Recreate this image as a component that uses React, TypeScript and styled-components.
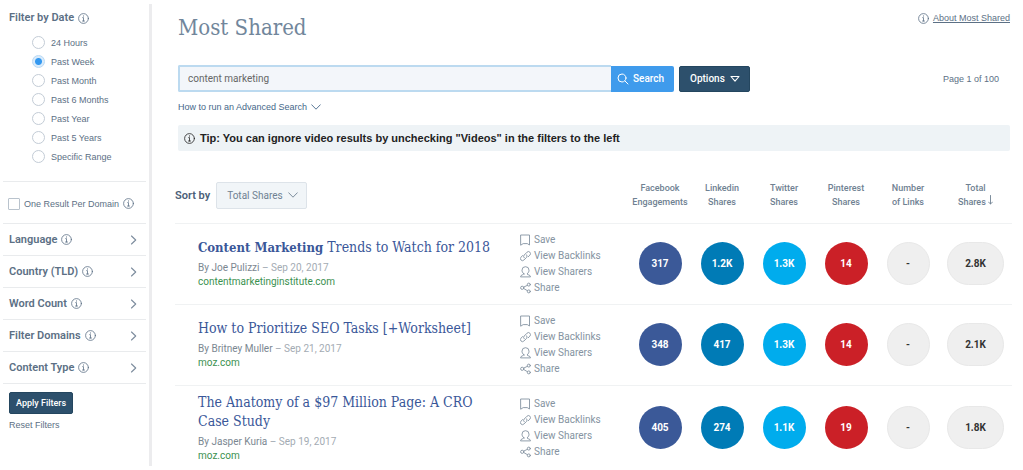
import React from "react";
import styled, { createGlobalStyle, css } from "styled-components";

const Global = createGlobalStyle`
  *, *::before, *::after { box-sizing: border-box; }
  body {
    margin: 0;
    background: #fff;
    color: #5c7085;
    font-family: Roboto, "Liberation Sans", sans-serif;
    font-size: 10px;
    line-height: 14px;
  }
  button, input, select { font: inherit; color: inherit; }
  a { color: inherit; text-decoration: none; }
`;

const slab = css`
  font-family: "Roboto Slab", "DejaVu Serif Condensed", "DejaVu Serif", serif;
`;

const small = css`
  font-family: "Liberation Sans", Arial, sans-serif;
  font-size: 9px;
`;

const Page = styled.div`
  display: flex;
  min-height: 470px;
`;

/* Sidebar */

const Sidebar = styled.aside`
  flex: 0 0 152px;
  margin: 4px 0;
  padding: 0 3px;
  border-right: 3px solid #ececee;
`;

const DateFilter = styled.fieldset`
  border: 0;
  border-bottom: 1px solid #e9ebed;
  margin: 0;
  padding: 7px 6px 15px;
`;

const FilterTitle = styled.legend`
  float: left;
  width: 100%;
  display: flex;
  align-items: center;
  gap: 4px;
  padding: 0;
  margin-bottom: 8px;
  font-size: 11px;
  font-weight: 600;
`;

const RadioRow = styled.label`
  ${small}
  clear: both;
  display: flex;
  align-items: center;
  gap: 6px;
  height: 19px;
  padding-left: 23px;
`;

const Radio = styled.input`
  appearance: none;
  width: 13px;
  height: 13px;
  margin: 0;
  border: 1px solid #c3ccd6;
  border-radius: 50%;
  background: #fff;
  &:checked {
    border-color: #b9d9f5;
    background: radial-gradient(circle, #3398f0 0 3px, #d9ebfb 4px);
  }
`;

const CheckRow = styled.div`
  ${small}
  display: flex;
  align-items: center;
  gap: 4px;
  height: 42px;
  padding: 2px 5px 0;
  border-bottom: 1px solid #e9ebed;
  white-space: nowrap;
`;

const Checkbox = styled.input`
  appearance: none;
  flex: none;
  width: 12px;
  height: 12px;
  margin: 0;
  border: 1px solid #b9c3cd;
  border-radius: 1px;
  background: #fff;
`;

const FilterButton = styled.button`
  display: flex;
  align-items: center;
  gap: 4px;
  width: 100%;
  height: 32px;
  padding: 0 9px 0 6px;
  border: 0;
  border-bottom: 1px solid #e9ebed;
  background: none;
  font-size: 11px;
  font-weight: 600;
  svg:last-child { margin-left: auto; }
`;

const SideActions = styled.div`
  display: flex;
  flex-direction: column;
  align-items: flex-start;
  gap: 4px;
  padding: 8px 6px 0;
`;

const ApplyButton = styled.button`
  height: 22px;
  padding: 0 6px;
  border: 1px solid #24465f;
  border-radius: 2px;
  background: #2d506c;
  color: #fff;
  font-size: 9px;
  font-weight: 500;
`;

const ResetLink = styled.a`
  ${small}
`;

/* Main column */

const Main = styled.main`
  flex: 1;
  min-width: 0;
`;

const Top = styled.div`
  padding: 11px 13px 0 26px;
`;

const Heading = styled.header`
  display: flex;
  justify-content: space-between;
  align-items: flex-start;
  height: 54px;
`;

const Title = styled.h1`
  ${slab}
  margin: 0;
  font-size: 22px;
  line-height: 34px;
  font-weight: 300;
  color: #71869b;
`;

const About = styled.a`
  ${small}
  display: flex;
  align-items: center;
  gap: 4px;
  span { text-decoration: underline; }
`;

const SearchBar = styled.form`
  display: flex;
  align-items: center;
  height: 27px;
`;

const SearchInput = styled.input`
  flex: 1;
  min-width: 0;
  height: 27px;
  padding: 0 8px;
  border: 2px solid #bcdaf0;
  border-right: 0;
  border-radius: 2px 0 0 2px;
  background: #f3f6fa;
  color: #666;
  outline: none;
`;

const SearchButton = styled.button`
  display: flex;
  align-items: center;
  gap: 4px;
  height: 26px;
  width: 63px;
  padding: 0 6px;
  border: 0;
  border-radius: 0 2px 2px 0;
  background: #3f9bec;
  color: #fff;
  font-weight: 500;
`;

const OptionsButton = styled(SearchButton)`
  justify-content: space-between;
  width: 71px;
  margin-left: 5px;
  padding: 0 9px 0 10px;
  border: 1px solid #24465f;
  border-radius: 2px;
  background: #2d506c;
`;

const PageCount = styled.div`
  ${small}
  width: 260px;
  padding-right: 11px;
  text-align: right;
`;

const Advanced = styled.a`
  ${small}
  display: inline-flex;
  align-items: center;
  gap: 4px;
  margin-top: 8px;
  color: #46688a;
`;

const Tip = styled.div`
  display: flex;
  align-items: center;
  gap: 5px;
  height: 26px;
  margin-top: 11px;
  padding: 0 6px;
  border-radius: 2px;
  background: #eef3f6;
  color: #222;
  font-family: "Liberation Sans", Arial, sans-serif;
  font-size: 11px;
  font-weight: 700;
`;

/* Results */

const Results = styled.section`
  padding: 21px 11px 0 23px;
`;

const Table = styled.table`
  width: 100%;
  border-collapse: collapse;
  table-layout: fixed;
`;

const Col = styled.col<{ $w?: number }>`
  ${(p) => p.$w && `width: ${p.$w}px;`}
`;

const HeadCell = styled.th`
  height: 51px;
  padding: 9px 0 0;
  vertical-align: top;
  text-align: center;
  font-size: 9px;
  font-weight: 500;
  color: #6f8192;
  white-space: nowrap;
`;

const SortCell = styled.td`
  padding: 10px 0 0;
  vertical-align: top;
`;

const Sort = styled.label`
  display: inline-flex;
  align-items: center;
  gap: 6px;
  font-size: 11px;
  font-weight: 600;
  color: #4b6078;
`;

const SelectWrap = styled.span`
  position: relative;
  color: #6f8192;
  svg {
    position: absolute;
    right: 9px;
    top: 9px;
    pointer-events: none;
  }
`;

const Select = styled.select`
  appearance: none;
  display: block;
  width: 91px;
  height: 27px;
  padding: 0 10px;
  border: 1px solid #dde3e9;
  border-radius: 2px;
  background: #f1f5f8;
  font-size: 10px;
  font-weight: 400;
`;

const Row = styled.tr`
  border-top: 1px solid #f0f2f3;
`;

const Cell = styled.td`
  padding: 8px 0;
  text-align: center;
  vertical-align: middle;
`;

const TextCell = styled(Cell)`
  padding: 7px 20px 7px 23px;
  text-align: left;
`;

const ArticleTitle = styled.h2`
  ${slab}
  margin: 0 0 4px;
  font-size: 14px;
  line-height: 19px;
  font-weight: 400;
  color: #3a5799;
  strong { font-size: 13px; }
`;

const Byline = styled.div`
  color: #a3abb3;
  b {
    font-weight: 400;
    color: #7b8791;
  }
`;

const Domain = styled.a`
  display: block;
  color: #3b9150;
`;

const Actions = styled.div`
  display: flex;
  flex-direction: column;
  align-items: flex-start;
`;

const Action = styled.button`
  display: flex;
  align-items: center;
  gap: 3px;
  height: 16px;
  padding: 0 1px;
  border: 0;
  background: none;
  color: #8593a1;
`;

const tones = {
  facebook: "#3b5998",
  linkedin: "#007bb6",
  twitter: "#00aced",
  pinterest: "#cb2027",
  plain: "#efefef",
};

const Badge = styled.span<{ $tone: keyof typeof tones; $wide?: boolean }>`
  display: inline-flex;
  align-items: center;
  justify-content: center;
  width: ${(p) => (p.$wide ? 57 : 43)}px;
  height: 43px;
  border: 1px solid ${(p) => (p.$tone === "plain" ? "#e8e8e8" : "transparent")};
  border-radius: 22px;
  vertical-align: middle;
  background: ${(p) => tones[p.$tone]} border-box;
  color: ${(p) => (p.$tone === "plain" ? "#333" : "#fff")};
  font-weight: 700;
`;

/* Icons */

const Svg = styled.svg`
  flex: none;
  fill: none;
  stroke: currentColor;
  stroke-linecap: round;
  stroke-linejoin: round;
`;

const InfoIcon = () => (
  <Svg width="11" height="11" viewBox="0 0 11 11" strokeWidth="0.8">
    <circle cx="5.5" cy="5.5" r="4.9" />
    <path d="M4.700 4.600h.8v3.400M4.500 8h2M5.500 2.800v.4" />
  </Svg>
);

const RightIcon = () => (
  <Svg width="7" height="10" viewBox="0 0 7 10" strokeWidth="1.1" opacity="0.8">
    <path d="M1.5 1 5.7 5 1.5 9" />
  </Svg>
);

const DownIcon = () => (
  <Svg width="10" height="8" viewBox="0 0 10 8" strokeWidth="0.9">
    <path d="M.7 1.8 5 6.2 9.3 1.8" />
  </Svg>
);

const SearchIcon = () => (
  <Svg width="12" height="12" viewBox="0 0 12 12" strokeWidth="1">
    <circle cx="5" cy="5" r="4" />
    <path d="m8 8 3 3" />
  </Svg>
);

const CaretIcon = () => (
  <Svg width="10" height="8" viewBox="0 0 10 8" strokeWidth="1.1">
    <path d="M1 1.5h8L5 6.200z" />
  </Svg>
);

const SortArrow = () => (
  <Svg width="5" height="10" viewBox="0 0 5 10" strokeWidth="0.9">
    <path d="M2.5.5v8.5M.5 7l2 2 2-2" />
  </Svg>
);

const SaveIcon = () => (
  <Svg width="11" height="12" viewBox="0 0 11 12" strokeWidth="0.9">
    <path d="M1 1h8.500v10L7.300 9.600H3.200L1 11z" />
  </Svg>
);

const LinkIcon = () => (
  <Svg width="11" height="12" viewBox="0 0 11 12" strokeWidth="0.9">
    <path d="M4.2 7.8A2 2 0 0 1 4.2 5L7 2.2a2 2 0 0 1 2.9 2.9L8.2 6.8" />
    <path d="M6.6 4.8a2 2 0 0 1 0 2.6L3.9 10A2 2 0 0 1 1 7.200l1.600-1.700" />
  </Svg>
);

const PersonIcon = () => (
  <Svg width="11" height="12" viewBox="0 0 11 12" strokeWidth="0.9">
    <path d="M4 8C2.200 6.400 2 5.200 2 4.200a3.500 3.500 0 0 1 7 0C9 5.200 8.800 6.400 7 8c0 1 3.500.5 3.500 2.900H.5C.5 8.500 4 9 4 8z" />
  </Svg>
);

const ShareIcon = () => (
  <Svg width="11" height="12" viewBox="0 0 11 12" strokeWidth="0.9">
    <circle cx="2.200" cy="5.800" r="1.600" />
    <circle cx="8.800" cy="2.600" r="1.500" />
    <circle cx="8.800" cy="9.400" r="1.500" />
    <path d="m3.700 5.100 3.700-1.800M3.700 6.500l3.700 2.200" />
  </Svg>
);

/* Data */

const ranges = ["24 Hours", "Past Week", "Past Month", "Past 6 Months", "Past Year", "Past 5 Years", "Specific Range"];
const filters = ["Language", "Country (TLD)", "Word Count", "Filter Domains", "Content Type"];
const columns = [
  ["Facebook", "Engagements"],
  ["Linkedin", "Shares"],
  ["Twitter", "Shares"],
  ["Pinterest", "Shares"],
  ["Number", "of Links"],
];

const articles = [
  {
    title: <><strong>Content Marketing</strong> Trends to Watch for 2018</>,
    author: "Joe Pulizzi", date: "Sep 20, 2017", domain: "contentmarketinginstitute.com",
    counts: ["317", "1.2K", "1.3K", "14", "-"], total: "2.8K",
  },
  {
    title: "How to Prioritize SEO Tasks [+Worksheet]",
    author: "Britney Muller", date: "Sep 21, 2017", domain: "moz.com",
    counts: ["348", "417", "1.3K", "14", "-"], total: "2.1K",
  },
  {
    title: "The Anatomy of a $97 Million Page: A CRO Case Study",
    author: "Jasper Kuria", date: "Sep 19, 2017", domain: "moz.com",
    counts: ["405", "274", "1.1K", "19", "-"], total: "1.8K",
  },
];

const badgeTones: (keyof typeof tones)[] = ["facebook", "linkedin", "twitter", "pinterest", "plain"];

export default function App() {
  return (
    <>
      <Global />
      <Page>
        <Sidebar>
          <DateFilter>
            <FilterTitle>Filter by Date <InfoIcon /></FilterTitle>
            {ranges.map((r) => (
              <RadioRow key={r}>
                <Radio type="radio" name="range" defaultChecked={r === "Past Week"} />
                {r}
              </RadioRow>
            ))}
          </DateFilter>
          <CheckRow>
            <Checkbox type="checkbox" id="one-result" />
            <label htmlFor="one-result">One Result Per Domain</label>
            <InfoIcon />
          </CheckRow>
          {filters.map((f) => (
            <FilterButton key={f} type="button">{f} <InfoIcon /><RightIcon /></FilterButton>
          ))}
          <SideActions>
            <ApplyButton type="button">Apply Filters</ApplyButton>
            <ResetLink href="#reset">Reset Filters</ResetLink>
          </SideActions>
        </Sidebar>

        <Main>
          <Top>
            <Heading>
              <Title>Most Shared</Title>
              <About href="#about"><InfoIcon /><span>About Most Shared</span></About>
            </Heading>
            <SearchBar onSubmit={(e) => e.preventDefault()}>
              <SearchInput aria-label="Search" defaultValue="content marketing" />
              <SearchButton type="submit"><SearchIcon />Search</SearchButton>
              <OptionsButton type="button">Options<CaretIcon /></OptionsButton>
              <PageCount>Page 1 of 100</PageCount>
            </SearchBar>
            <Advanced href="#advanced">How to run an Advanced Search <DownIcon /></Advanced>
            <Tip><InfoIcon />Tip: You can ignore video results by unchecking "Videos" in the filters to the left</Tip>
          </Top>

          <Results>
            <Table>
              <colgroup>
                <Col />
                <Col $w={110} />
                {columns.map(([a]) => <Col key={a} $w={62} />)}
                <Col $w={73} />
              </colgroup>
              <thead>
                <tr>
                  <SortCell colSpan={2}>
                    <Sort>
                      Sort by
                      <SelectWrap>
                        <Select defaultValue="total">
                          <option value="total">Total Shares</option>
                        </Select>
                        <DownIcon />
                      </SelectWrap>
                    </Sort>
                  </SortCell>
                  {columns.map(([a, b]) => <HeadCell key={a}>{a}<br />{b}</HeadCell>)}
                  <HeadCell>Total<br />Shares <SortArrow /></HeadCell>
                </tr>
              </thead>
              <tbody>
                {articles.map((a) => (
                  <Row key={a.author}>
                    <TextCell>
                      <ArticleTitle>{a.title}</ArticleTitle>
                      <Byline><b>By {a.author}</b> – {a.date}</Byline>
                      <Domain href="#domain">{a.domain}</Domain>
                    </TextCell>
                    <Cell>
                      <Actions>
                        <Action type="button"><SaveIcon />Save</Action>
                        <Action type="button"><LinkIcon />View Backlinks</Action>
                        <Action type="button"><PersonIcon />View Sharers</Action>
                        <Action type="button"><ShareIcon />Share</Action>
                      </Actions>
                    </Cell>
                    {a.counts.map((c, i) => (
                      <Cell key={i}><Badge $tone={badgeTones[i]}>{c}</Badge></Cell>
                    ))}
                    <Cell><Badge $tone="plain" $wide>{a.total}</Badge></Cell>
                  </Row>
                ))}
              </tbody>
            </Table>
          </Results>
        </Main>
      </Page>
    </>
  );
}
